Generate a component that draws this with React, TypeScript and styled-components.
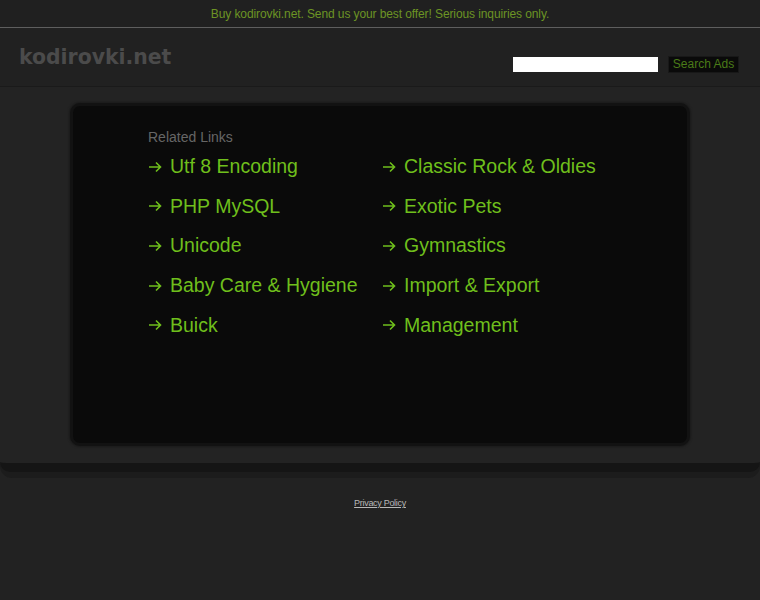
import React from 'react';
import styled, { createGlobalStyle } from 'styled-components';

const GlobalStyle = createGlobalStyle`
  html, body {
    margin: 0;
    padding: 0;
    background: #222222;
    font-family: "Liberation Sans", Arial, sans-serif;
  }
`;

const leftLinks = ['Utf 8 Encoding', 'PHP MySQL', 'Unicode', 'Baby Care & Hygiene', 'Buick'];
const rightLinks = ['Classic Rock & Oldies', 'Exotic Pets', 'Gymnastics', 'Import & Export', 'Management'];

const TopBar = styled.div`
  height: 27px;
  line-height: 29px;
  background: #202020;
  border-bottom: 1px solid #5e5e5e;
  text-align: center;
  font-size: 12px;
  letter-spacing: -0.1px;
  color: #6c9424;
`;

const Header = styled.header`
  height: 58px;
  display: flex;
  align-items: center;
  justify-content: space-between;
  padding: 0 21px 0 19px;
  background: #212121;
  border-bottom: 1px solid #1a1a1a;
`;

const Logo = styled.div`
  font-family: "DejaVu Sans", Verdana, sans-serif;
  font-weight: bold;
  font-size: 20.4px;
  color: #4b4b4b;
`;

const SearchForm = styled.form`
  display: flex;
  align-items: center;
  gap: 10px;
  margin-top: 15px;
`;

const SearchInput = styled.input`
  width: 145px;
  height: 15px;
  box-sizing: border-box;
  border: none;
  background: #ffffff;
  padding: 0 3px;
`;

const SearchButton = styled.button`
  width: 71px;
  height: 17px;
  box-sizing: border-box;
  padding: 0;
  background: #0a0a0a;
  border: 1px solid #181818;
  color: #4a7b18;
  font-family: "Liberation Sans", Arial, sans-serif;
  font-size: 12px;
  line-height: 15px;
`;

const Shelf = styled.div`
  background: #1c1c1c;
  padding-bottom: 6px;
  border-radius: 0 0 12px 12px;
`;

const Main = styled.main`
  background: #232323;
  padding: 16px 0 17px;
  border-bottom: 9px solid #151515;
  border-radius: 0 0 10px 10px;
`;

const Box = styled.section`
  width: 620px;
  height: 343px;
  margin-left: 70px;
  padding: 21px 0 0 75px;
  box-sizing: border-box;
  background: #0a0a0a;
  border: 3px solid #121212;
  border-radius: 10px;
  box-shadow: 0 0 2px 1px #1a1a1a;
`;

const Heading = styled.div`
  font-size: 14px;
  line-height: 20px;
  color: #666666;
`;

const Columns = styled.div`
  display: grid;
  grid-template-columns: 234px 234px;
`;

const LinkList = styled.ul`
  list-style: none;
  margin: 0;
  padding: 0;
`;

const LinkItem = styled.li`
  height: 39.6px;
  display: flex;
  align-items: center;
  gap: 7px;
`;

const LinkText = styled.a`
  font-size: 19.5px;
  color: #6fbf1c;
  text-decoration: none;
  white-space: nowrap;
`;

const Footer = styled.footer`
  padding-top: 14px;
  text-align: center;
`;

const PrivacyLink = styled.a`
  font-size: 9px;
  letter-spacing: -0.3px;
  color: #b8b8b8;
  text-decoration: underline;
  text-decoration-color: #b8b8b8;
`;

const Arrow: React.FC = () => (
  <svg width="15" height="12" viewBox="0 0 15 12" fill="none">
    <path d="M1 6h12M8 1.5L12.5 6 8 10.5" stroke="#6fbf1c" strokeWidth="1.6" />
  </svg>
);

const Links: React.FC<{ items: string[] }> = ({ items }) => (
  <LinkList>
    {items.map((item) => (
      <LinkItem key={item}>
        <Arrow />
        <LinkText href="#">{item}</LinkText>
      </LinkItem>
    ))}
  </LinkList>
);

const App: React.FC = () => {
  return (
    <>
      <GlobalStyle />
      <TopBar>Buy kodirovki.net. Send us your best offer! Serious inquiries only.</TopBar>
      <Header>
        <Logo>kodirovki.net</Logo>
        <SearchForm onSubmit={(e) => e.preventDefault()}>
          <SearchInput type="text" />
          <SearchButton type="submit">Search Ads</SearchButton>
        </SearchForm>
      </Header>
      <Shelf>
        <Main>
          <Box>
            <Heading>Related Links</Heading>
            <Columns>
              <Links items={leftLinks} />
              <Links items={rightLinks} />
            </Columns>
          </Box>
        </Main>
      </Shelf>
      <Footer>
        <PrivacyLink href="#">Privacy Policy</PrivacyLink>
      </Footer>
    </>
  );
};

export default App;
